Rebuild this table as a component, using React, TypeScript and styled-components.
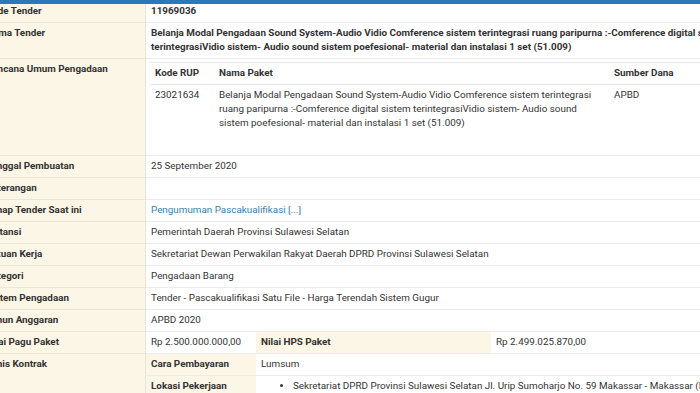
import React from "react";
import styled, { createGlobalStyle } from "styled-components";

const Global = createGlobalStyle`
  html, body { margin: 0; padding: 0; background: #fff; overflow: hidden; }
  body { font-family: Roboto, "Liberation Sans", Arial, sans-serif; font-size: 9.85px; color: #333; }
`;

const Page = styled.div`
  width: 780px;
  margin-left: -20px;
`;

const TopBar = styled.div`
  height: 4px;
  background: #2b79bd;
`;

const Grid = styled.div`
  display: grid;
  grid-template-columns: 166px 110px 235px 1fr;
  line-height: 14px;
`;

const Label = styled.div<{ $first?: boolean; $span?: number }>`
  grid-column: 1;
  ${(p) => (p.$span ? `grid-row: span ${p.$span};` : "")}
  background: #fcf6e6;
  font-weight: 700;
  padding: ${(p) => (p.$first ? "0 6px 4px" : "3px 6px 4px")};
  border-top: ${(p) => (p.$first ? "none" : "1px solid #ebe6d8")};
  border-right: 1px solid #e9e5dc;
`;

const Value = styled.div<{ $first?: boolean; $cols?: number; $bold?: boolean; $cream?: boolean }>`
  grid-column: span ${(p) => p.$cols ?? 1};
  padding: ${(p) => (p.$first ? "0 5px 4px" : "3px 5px 4px")};
  border-top: ${(p) => (p.$first ? "none" : "1px solid #ececec")};
  background: ${(p) => (p.$cream ? "#fcf6e6" : "#fff")};
  font-weight: ${(p) => (p.$bold ? 700 : 400)};
  white-space: nowrap;
  overflow: hidden;
  & + & { border-left: ${(p) => (p.$cream ? "1px solid #ebe6d8" : "none")}; }
`;

const Link = styled.a`
  color: #3a7cae;
  text-decoration: none;
`;

const NestedCell = styled.div`
  grid-column: span 3;
  padding: 3px 4px 4px;
  border-top: 1px solid #ececec;
`;

const Inner = styled.div`
  display: grid;
  grid-template-columns: 64px 395px 1fr;
  margin-bottom: 17px;
`;

const InnerHead = styled.div`
  font-weight: 700;
  padding: 3px 5px 4px;
  border-top: 1px solid #e6e6e6;
  border-bottom: 1px solid #e6e6e6;
  white-space: nowrap;
`;

const InnerCell = styled.div`
  padding: 3px 5px 4px;
  white-space: nowrap;
`;

const Bullets = styled.ul`
  margin: 0;
  padding-left: 32px;
  list-style: disc;
`;

export default function App() {
  return (
    <>
      <Global />
      <Page>
        <TopBar />
        <Grid>
          <Label $first>Kode Tender</Label>
          <Value $first $cols={3} $bold>11969036</Value>

          <Label>Nama Tender</Label>
          <Value $cols={3} $bold>
            Belanja Modal Pengadaan Sound System-Audio Vidio Comference sistem terintegrasi ruang paripurna :-Comference digital sistem
            <br />
            terintegrasiVidio sistem- Audio sound sistem poefesional- material dan instalasi 1 set (51.009)
          </Value>

          <Label>Rencana Umum Pengadaan</Label>
          <NestedCell>
            <Inner>
              <InnerHead>Kode RUP</InnerHead>
              <InnerHead>Nama Paket</InnerHead>
              <InnerHead>Sumber Dana</InnerHead>
              <InnerCell>23021634</InnerCell>
              <InnerCell>
                Belanja Modal Pengadaan Sound System-Audio Vidio Comference sistem terintegrasi
                <br />
                ruang paripurna :-Comference digital sistem terintegrasiVidio sistem- Audio sound
                <br />
                sistem poefesional- material dan instalasi 1 set (51.009)
              </InnerCell>
              <InnerCell>APBD</InnerCell>
            </Inner>
          </NestedCell>

          <Label>Tanggal Pembuatan</Label>
          <Value $cols={3}>25 September 2020</Value>

          <Label>Keterangan</Label>
          <Value $cols={3}>&nbsp;</Value>

          <Label>Tahap Tender Saat ini</Label>
          <Value $cols={3}>
            <Link href="#">Pengumuman Pascakualifikasi [...]</Link>
          </Value>

          <Label>Instansi</Label>
          <Value $cols={3}>Pemerintah Daerah Provinsi Sulawesi Selatan</Value>

          <Label>Satuan Kerja</Label>
          <Value $cols={3}>Sekretariat Dewan Perwakilan Rakyat Daerah DPRD Provinsi Sulawesi Selatan</Value>

          <Label>Kategori</Label>
          <Value $cols={3}>Pengadaan Barang</Value>

          <Label>Sistem Pengadaan</Label>
          <Value $cols={3}>Tender - Pascakualifikasi Satu File - Harga Terendah Sistem Gugur</Value>

          <Label>Tahun Anggaran</Label>
          <Value $cols={3}>APBD 2020</Value>

          <Label>Nilai Pagu Paket</Label>
          <Value>Rp 2.500.000.000,00</Value>
          <Value $cream $bold>Nilai HPS Paket</Value>
          <Value>Rp 2.499.025.870,00</Value>

          <Label $span={2}>Jenis Kontrak</Label>
          <Value $cream $bold>Cara Pembayaran</Value>
          <Value $cols={2}>Lumsum</Value>

          <Value $cream $bold>Lokasi Pekerjaan</Value>
          <Value $cols={2}>
            <Bullets>
              <li>Sekretariat DPRD Provinsi Sulawesi Selatan Jl. Urip Sumoharjo No. 59 Makassar - Makassar (Kota)</li>
            </Bullets>
          </Value>
        </Grid>
      </Page>
    </>
  );
}
